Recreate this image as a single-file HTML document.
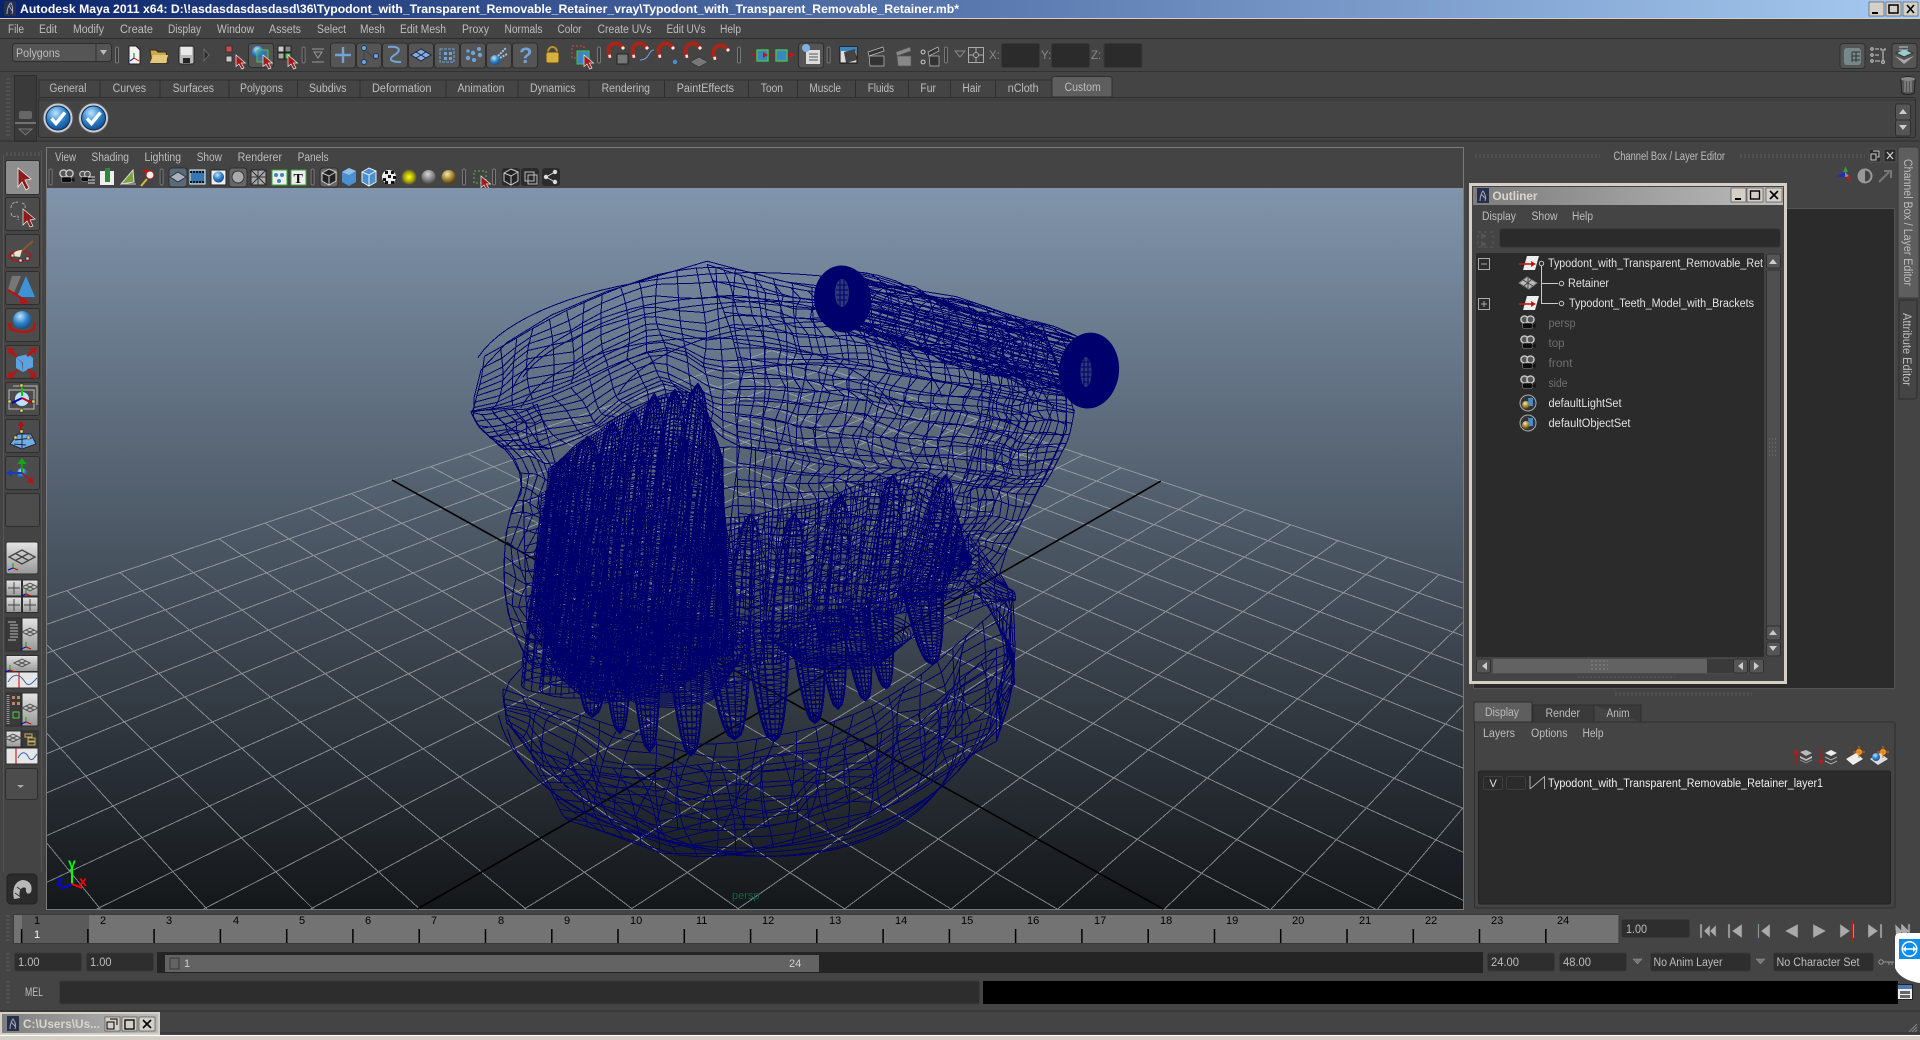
<!DOCTYPE html>
<html lang="en"><head><meta charset="utf-8"><title>Autodesk Maya 2011</title>
<style>
html,body{margin:0;padding:0;background:#444;overflow:hidden;width:1920px;height:1040px}
svg{display:block}
text{font-family:"Liberation Sans",sans-serif;font-size:11.5px;fill:#bdbdbd;white-space:pre}
.w{fill:#e2e2e2}.d{fill:#6f6f6f}.k{fill:#000;font-size:11px}
.b{stroke:#2e2e2e;fill:#555}
.g{stroke:#5d5d5d;stroke-dasharray:2 2;stroke-width:1;fill:none}
</style></head><body>
<svg xmlns="http://www.w3.org/2000/svg" width="1920" height="1040" viewBox="0 0 1920 1040">
<defs>
<linearGradient id="tb" x1="0" x2="1" y1="0" y2="0"><stop offset="0" stop-color="#0a246a"/><stop offset="1" stop-color="#a6caf0"/></linearGradient>
<linearGradient id="ot" x1="0" x2="1" y1="0" y2="0"><stop offset="0" stop-color="#7d7d7d"/><stop offset="1" stop-color="#bcbcbc"/></linearGradient>
<linearGradient id="vp" x1="0" x2="0" y1="0" y2="1"><stop offset="0" stop-color="#8094ab"/><stop offset="1" stop-color="#14171a"/></linearGradient>
<linearGradient id="lb" x1="0" x2="0" y1="0" y2="1"><stop offset="0" stop-color="#e4e4e4"/><stop offset="1" stop-color="#989898"/></linearGradient>
<radialGradient id="bl" cx=".4" cy=".3" r=".8"><stop offset="0" stop-color="#bfe4ff"/><stop offset=".5" stop-color="#2f83c8"/><stop offset="1" stop-color="#0b3f80"/></radialGradient>
<radialGradient id="gd" cx=".4" cy=".3" r=".8"><stop offset="0" stop-color="#f6e9b0"/><stop offset=".55" stop-color="#9a7a2a"/><stop offset="1" stop-color="#2e2408"/></radialGradient>
<radialGradient id="yl" cx=".5" cy=".5" r=".5"><stop offset="0" stop-color="#ffff30"/><stop offset=".6" stop-color="#aaa800"/><stop offset="1" stop-color="#444"/></radialGradient>
<radialGradient id="gy" cx=".45" cy=".3" r=".8"><stop offset="0" stop-color="#d8d8d8"/><stop offset="1" stop-color="#333"/></radialGradient>
<clipPath id="vc"><rect x="47" y="188" width="1416" height="721"/></clipPath>
<clipPath id="tc"><rect x="1476" y="253" width="288" height="400"/></clipPath>
<g id="cur"><path d="M0 0V11.5L3 9L5.7 14L8 13L5.4 8H9.5Z" fill="#a11d1d" stroke="#f0f0f0" stroke-width=".7"/></g>
<g id="sep"><rect x="-1.5" y="-8" width="3" height="16" rx="1.5" fill="#3a3a3a" stroke="#777"/></g>
<g id="cam"><circle cx="-3" cy="-3.5" r="3.6" fill="#555" stroke="#ccc" stroke-width="1.4"/><circle cx="3" cy="-3.5" r="3.6" fill="#555" stroke="#ccc" stroke-width="1.4"/><rect x="-5" y="0" width="10" height="5.5" rx="2" fill="#0c0c0c" stroke="#999" stroke-width=".6"/><path d="M5 2L8 .5V5L5 3.5Z" fill="#111"/></g>
<g id="mag"><path d="M-6 6L-7.5 -1A7.5 7.5 0 0 1 3 -8L8 -3" fill="none" stroke="#aa2418" stroke-width="4"/><path d="M-7.5 4.5L-5 4M6 -5L8 -3" stroke="#eee" stroke-width="3" fill="none"/></g>
<g id="chk"><circle r="15" fill="#c8ccd0" stroke="#555"/><circle r="12" fill="url(#bl)" stroke="#0a2a55"/><path d="M-6.5 .5L-2 5.5L7 -5.5" fill="none" stroke="#fff" stroke-width="3.4"/></g>
<g id="cube"><path d="M-7 -4L0 -8L7 -5V4L0 8L-7 4Z" fill="#222" stroke="#ccc"/><path d="M-7 -4L0 -1L7 -5M0 -1V8" fill="none" stroke="#ccc"/></g>
<g id="plane"><path d="M-12 0L0 -6L12 0L0 6ZM-6 -3L6 3M6 -3L-6 3" fill="#aaa" stroke="#333" stroke-width="1.2"/></g>
<g id="mini"><path d="M-8 0L0 -4L8 0L0 4ZM-4 -2L4 2M4 -2L-4 2" fill="none" stroke="#555"/></g>
<g id="axs"><path d="M0 0V-5" stroke="#0a0"/><path d="M0 0L-5 2" stroke="#00c"/><path d="M0 0L5 2" stroke="#c00"/></g>
<g id="xfm"><path d="M-5 7L-1 -7H11L7 7Z" fill="#eee"/><path d="M-9 1H6" stroke="#c01818" stroke-width="1.6"/><path d="M3 -2L8 1L3 4Z" fill="#c01818"/></g>
<g id="set"><circle r="8" fill="#333" stroke="#aaa"/><circle cx="-2" cy="2" r="4" fill="url(#gd)"/><path d="M0 -5L5 -5V3L1 3Z" fill="#3f8ed0"/></g>
</defs>

<rect width="1920" height="1040" fill="#444"/>

<!-- title bar -->
<rect width="1920" height="18" fill="url(#tb)"/>
<rect y="18" width="1920" height="1" fill="#d4d0c8"/>
<rect x="4" y="1" width="12" height="15" fill="#26304a"/><path d="M7 14C7 8 9 4 11 3C13 7 13 11 12 14M9 6L13 12" stroke="#aab" fill="none"/>
<text x="20" y="13" textLength="939" lengthAdjust="spacingAndGlyphs" style="font-weight:bold;font-size:12px;fill:#fff">Autodesk Maya 2011 x64: D:\!asdasdasdasdasd\36\Typodont_with_Transparent_Removable_Retainer_vray\Typodont_with_Transparent_Removable_Retainer.mb*</text>
<g fill="#d4d0c8" stroke="#333" stroke-width=".5">
<rect x="1869" y="2" width="15" height="14"/><rect x="1886" y="2" width="15" height="14"/><rect x="1903" y="2" width="15" height="14"/></g>
<path d="M1872 13H1878" stroke="#000" stroke-width="2"/><rect x="1889" y="5" width="9" height="8" fill="none" stroke="#000" stroke-width="1.5"/><path d="M1907 5L1914 13M1914 5L1907 13" stroke="#000" stroke-width="1.6"/>

<!-- menu -->
<g>
<text x="8" y="33" textLength="16" lengthAdjust="spacingAndGlyphs">File</text>
<text x="39" y="33" textLength="18" lengthAdjust="spacingAndGlyphs">Edit</text>
<text x="73" y="33" textLength="31" lengthAdjust="spacingAndGlyphs">Modify</text>
<text x="120" y="33" textLength="33" lengthAdjust="spacingAndGlyphs">Create</text>
<text x="168" y="33" textLength="33" lengthAdjust="spacingAndGlyphs">Display</text>
<text x="217" y="33" textLength="37" lengthAdjust="spacingAndGlyphs">Window</text>
<text x="269" y="33" textLength="32" lengthAdjust="spacingAndGlyphs">Assets</text>
<text x="317" y="33" textLength="29" lengthAdjust="spacingAndGlyphs">Select</text>
<text x="360" y="33" textLength="25" lengthAdjust="spacingAndGlyphs">Mesh</text>
<text x="400" y="33" textLength="46" lengthAdjust="spacingAndGlyphs">Edit Mesh</text>
<text x="462" y="33" textLength="27" lengthAdjust="spacingAndGlyphs">Proxy</text>
<text x="504.5" y="33" textLength="38" lengthAdjust="spacingAndGlyphs">Normals</text>
<text x="557.5" y="33" textLength="24" lengthAdjust="spacingAndGlyphs">Color</text>
<text x="597.5" y="33" textLength="54" lengthAdjust="spacingAndGlyphs">Create UVs</text>
<text x="666.5" y="33" textLength="39" lengthAdjust="spacingAndGlyphs">Edit UVs</text>
<text x="720" y="33" textLength="21" lengthAdjust="spacingAndGlyphs">Help</text>
</g>
<rect y="38" width="1920" height="1" fill="#2c2c2c"/>
<rect y="71" width="1920" height="1" fill="#333"/>

<!-- status toolbar -->
<rect x="12.5" y="43.5" width="99" height="18" rx="3" class="b"/><path d="M96 44V61" stroke="#2e2e2e"/>
<text x="16" y="57" textLength="44" lengthAdjust="spacingAndGlyphs">Polygons</text><path d="M100 50H107L103.5 55Z" fill="#bbb"/>
<use href="#sep" x="117" y="55"/><use href="#sep" x="303.6" y="55"/><use href="#sep" x="599" y="55"/><use href="#sep" x="739" y="55"/><use href="#sep" x="828.6" y="55"/><use href="#sep" x="946" y="55"/>
<path d="M204 49L209 55L204 61Z" fill="#2c2c2c" stroke="#666"/>
<path d="M129 46H136L140 50V64H129Z" fill="#f2f2f2" stroke="#222"/><path d="M134 58V53" stroke="#080"/><path d="M134 58L130 61" stroke="#00c"/><path d="M134 58L139 61" stroke="#c00"/>
<path d="M150 50H156L158 52H166L168 63H152Z" fill="#caa850" stroke="#3a2c08"/><path d="M150 63L153 55H168L166 63Z" fill="#e2c878"/>
<rect x="179" y="46" width="15" height="18" rx="2" fill="#b8b8b8" stroke="#222"/><rect x="181" y="47" width="11" height="8" fill="#e8e8e8"/><rect x="183" y="58" width="7" height="5" fill="#222"/>
<rect x="226" y="46" width="6" height="6" fill="#d84848" stroke="#333"/><rect x="226" y="56" width="6" height="6" fill="#ccc" stroke="#333"/><use href="#cur" x="236" y="55"/>
<rect x="248.5" y="43.5" width="25" height="24" rx="3" class="b"/><circle cx="258" cy="52" r="6" fill="url(#bl)"/><rect x="257" y="50" width="11" height="12" fill="#3a86c0" fill-opacity=".6" stroke="#4ec04e"/><use href="#cur" x="263" y="55"/>
<rect x="278" y="46" width="6" height="6" fill="#ccc" stroke="#222"/><rect x="285" y="46" width="6" height="6" fill="#888" stroke="#222"/><rect x="278" y="53" width="6" height="6" fill="#aaa" stroke="#222"/><rect x="285" y="53" width="6" height="6" fill="#4ec04e" stroke="#222"/><use href="#cur" x="288" y="55"/>
<path d="M312 49H324M314 52H322L318 58ZM312 62H324" stroke="#999" fill="none"/>
<g class="b"><rect x="330.5" y="43" width="25" height="25" rx="3"/><rect x="356.5" y="43" width="25" height="25" rx="3"/><rect x="382.5" y="43" width="25" height="25" rx="3"/><rect x="408.5" y="43" width="25" height="25" rx="3"/><rect x="434.5" y="43" width="25" height="25" rx="3"/><rect x="460.5" y="43" width="25" height="25" rx="3"/><rect x="486.5" y="43" width="25" height="25" rx="3"/><rect x="512.5" y="43" width="25" height="25" rx="3"/></g>
<path d="M343 47V63M335 55H351" stroke="#6fa4d8" stroke-width="2.4"/>
<path d="M364 62V49L376 60" fill="none" stroke="#444"/><g fill="#6fa4d8" stroke="#1e3a5a"><circle cx="364" cy="48" r="2.5"/><circle cx="364" cy="62" r="2.5"/><circle cx="376" cy="56" r="2.5"/></g>
<path d="M388 47C398 46 402 49 396 54C389 58 388 62 401 62" fill="none" stroke="#6fa4d8" stroke-width="2"/>
<path d="M411 55L421 49L431 55L421 61Z" fill="#7fb0dc" stroke="#224"/><path d="M416 52L426 58M426 52L416 58" stroke="#224"/>
<rect x="440" y="49" width="14" height="13" fill="none" stroke="#6fa4d8" stroke-dasharray="3 1"/><g fill="#6fa4d8"><rect x="444" y="52" width="3" height="3"/><rect x="449" y="52" width="3" height="3"/><rect x="444" y="57" width="3" height="3"/><rect x="449" y="57" width="3" height="3"/></g>
<g fill="#6fa4d8"><circle cx="468" cy="58" r="2.2"/><circle cx="473" cy="53" r="2.2"/><circle cx="479" cy="49" r="2"/><circle cx="474" cy="60" r="2"/><circle cx="480" cy="55" r="2.2"/><circle cx="468" cy="51" r="1.6"/></g>
<circle cx="495" cy="60" r="5" fill="url(#bl)"/><path d="M498 56L506 48M500 58L507 54" stroke="#9cc4e6" stroke-width="2" stroke-dasharray="2 1"/>
<text x="519" y="63" style="font-size:22px;fill:#6fa4d8;font-weight:bold">?</text>
<path d="M548 52A4.5 5 0 0 1 557 52" fill="none" stroke="#b89030" stroke-width="2"/><rect x="546" y="52" width="13" height="11" rx="2" fill="#d8b040" stroke="#5c4610"/>
<rect x="572" y="46" width="12" height="12" fill="none" stroke="#d84848" stroke-dasharray="2 2"/><rect x="577" y="51" width="12" height="13" fill="#3a86c0" stroke="#4ec04e"/><use href="#cur" x="584" y="55"/>
<use href="#mag" x="616" y="52"/><rect x="617" y="54" width="11" height="10" fill="#777" stroke="#222"/><use href="#mag" x="640" y="52"/><path d="M640 60C650 60 648 50 654 50" stroke="#6fa4d8" fill="none"/><use href="#mag" x="666" y="52"/><circle cx="675" cy="62" r="2.2" fill="#4a90d0"/><use href="#mag" x="693" y="52"/><path d="M690 62L699 57L708 62L699 67Z" fill="#777" stroke="#222" stroke-width=".5"/><use href="#mag" x="721" y="54"/>
<path d="M751 55H764M770 55H794" stroke="#b01818" stroke-width="1.4"/><rect x="757" y="50" width="11" height="11" fill="#3a86c0" stroke="#4ec04e" stroke-width="1.4"/><rect x="776" y="50" width="11" height="11" fill="#3a86c0" stroke="#4ec04e" stroke-width="1.4"/><path d="M763 52L768 55L763 58ZM790 52L795 55L790 58Z" fill="#c01818"/>
<rect x="798.5" y="43" width="25" height="25" rx="3" class="b"/><rect x="806" y="50" width="14" height="14" fill="#ddd"/><path d="M809 54H818M809 57H818M809 60H818" stroke="#555"/><circle cx="806" cy="48" r="4" fill="#7fb0e0"/>
<rect x="840" y="47" width="17" height="16" fill="#ddd" stroke="#111"/><rect x="840" y="47" width="17" height="4" fill="#3a86c0"/><path d="M844 52L855 49L857 60L846 63Z" fill="#444"/>
<path d="M868 52L883 47L884 51L869 56ZM869 56H884V66H870Z" fill="#333" stroke="#bbb" stroke-width=".7"/>
<path d="M896 52L910 47L911 51L897 56ZM897 56H911V66H898Z" fill="#888" stroke="#555" stroke-width=".7"/><path d="M923 50a2 2 0 1 0 .1 0M923 60a2 2 0 1 0 .1 0" fill="none" stroke="#ccc"/><path d="M928 52L938 47L939 51L929 56ZM929 56H939V66H930Z" fill="#333" stroke="#bbb" stroke-width=".7"/>
<path d="M955 51H965L960 57Z" fill="none" stroke="#888"/><rect x="968.5" y="47.5" width="15" height="15" fill="none" stroke="#aaa"/><path d="M976 47V63M968 55H984" stroke="#aaa"/><circle cx="976" cy="55" r="2.5" fill="#444" stroke="#aaa"/>
<text x="989" y="59" style="fill:#888">X:</text><text x="1041" y="59" style="fill:#888">Y:</text><text x="1091" y="59" style="fill:#888">Z:</text>
<g fill="#2b2b2b" stroke="#383838"><rect x="1001.5" y="43.5" width="38" height="24" rx="2"/><rect x="1051.5" y="43.5" width="38" height="24" rx="2"/><rect x="1104" y="43.5" width="38" height="24" rx="2"/></g>
<rect x="1840" y="43.5" width="25" height="25" rx="3" class="b"/><rect x="1844" y="48" width="17" height="17" rx="3" fill="#788"/><path d="M1852 52H1860M1852 56H1860M1852 60H1860M1852 52V62M1856 52V62" stroke="#333"/>
<circle cx="1872" cy="49" r="1.2" fill="none" stroke="#ccc"/><circle cx="1872" cy="55" r="1.2" fill="none" stroke="#ccc"/><circle cx="1872" cy="61" r="1.2" fill="none" stroke="#ccc"/><path d="M1875 49H1879M1875 55H1879M1875 61H1880M1883 51V60" stroke="#ccc"/><path d="M1881 48V50H1885V48" fill="none" stroke="#ccc"/><circle cx="1883" cy="62" r="1.4" fill="none" stroke="#ccc"/>
<rect x="1892" y="43.5" width="25" height="25" rx="3" class="b"/><path d="M1895 56L1904 60L1914 56L1904 64Z" fill="#aaa"/><path d="M1896 53L1904 57L1913 53L1904 49Z" fill="#9cc" stroke="#333"/><path d="M1899 47H1908M1899 50H1908" stroke="#bcd"/>

<!-- shelf -->
<path d="M7 78V138" class="g"/><path d="M9 78V138" class="g"/>
<rect x="14.5" y="75.5" width="22" height="66" fill="#3a3a3a" stroke="#2e2e2e"/><rect x="19" y="111" width="13" height="8" rx="2" fill="#666"/><path d="M15 123H36" stroke="#aaa"/><path d="M19 129H32L25.5 135Z" fill="#444" stroke="#777"/>
<g>
<path d="M39 97V80H100V97M100 80H160V97M160 80H229V97M229 80H297.5V97M297.5 80H360V97M360 80H446V97M446 80H518V97M518 80H589V97M589 80H664.5V97M664.5 80H748.5V97M748.5 80H797.5V97M797.5 80H855.5V97M855.5 80H908.5V97M908.5 80H950.6V97M950.6 80H995.5V97M995.5 80H1052" fill="#444" stroke="#2e2e2e"/>
<path d="M1052 97V79Q1052 76.5 1055 76.5H1109Q1112 76.5 1112 79V97Z" fill="#5e5e5e" stroke="#2e2e2e"/>
<text x="49.4" y="92" textLength="37" lengthAdjust="spacingAndGlyphs">General</text>
<text x="112.6" y="92" textLength="33.4" lengthAdjust="spacingAndGlyphs">Curves</text>
<text x="172.6" y="92" textLength="41.4" lengthAdjust="spacingAndGlyphs">Surfaces</text>
<text x="240" y="92" textLength="43" lengthAdjust="spacingAndGlyphs">Polygons</text>
<text x="309" y="92" textLength="37.5" lengthAdjust="spacingAndGlyphs">Subdivs</text>
<text x="372" y="92" textLength="59.4" lengthAdjust="spacingAndGlyphs">Deformation</text>
<text x="457.5" y="92" textLength="47" lengthAdjust="spacingAndGlyphs">Animation</text>
<text x="530" y="92" textLength="45.5" lengthAdjust="spacingAndGlyphs">Dynamics</text>
<text x="601.6" y="92" textLength="48.4" lengthAdjust="spacingAndGlyphs">Rendering</text>
<text x="676.7" y="92" textLength="57.3" lengthAdjust="spacingAndGlyphs">PaintEffects</text>
<text x="760.8" y="92" textLength="22.2" lengthAdjust="spacingAndGlyphs">Toon</text>
<text x="809.4" y="92" textLength="31.6" lengthAdjust="spacingAndGlyphs">Muscle</text>
<text x="867.8" y="92" textLength="26.2" lengthAdjust="spacingAndGlyphs">Fluids</text>
<text x="920.4" y="92" textLength="15.6" lengthAdjust="spacingAndGlyphs">Fur</text>
<text x="962.4" y="92" textLength="18.6" lengthAdjust="spacingAndGlyphs">Hair</text>
<text x="1007.8" y="92" textLength="30.7" lengthAdjust="spacingAndGlyphs">nCloth</text>
<text x="1064.5" y="91" textLength="36.2" lengthAdjust="spacingAndGlyphs">Custom</text>
</g>
<path d="M1901 80a4 2 0 0 1 14 0l-1 13q-6 3 -12 0Z" fill="#555" stroke="#222"/><path d="M1905 81V92M1908 81V92M1911 81V92" stroke="#999"/><ellipse cx="1908" cy="79" rx="7" ry="2" fill="#888"/>
<rect x="38.5" y="97.5" width="1877" height="40" rx="2" fill="#444" stroke="#2e2e2e"/><path d="M39 100H1915" stroke="#333"/>
<path d="M0 141H1920" stroke="#2e2e2e"/>
<use href="#chk" x="58" y="118"/><use href="#chk" x="93.5" y="118"/>
<rect x="1895.5" y="104" width="15" height="16" rx="2" fill="#555" stroke="#2e2e2e"/><rect x="1895.5" y="120" width="15" height="16" rx="2" fill="#555" stroke="#2e2e2e"/><path d="M1899 114H1907L1903 109ZM1899 125H1907L1903 130Z" fill="#ccc"/>

<!-- left tools -->
<path d="M6 155H40" class="g"/><path d="M6 153H40" class="g"/>
<path d="M41.5 150V872M3.5 155V872" stroke="#555"/>
<g class="b" style="fill:#4c4c4c"><rect x="5.5" y="197.5" width="34" height="33" rx="2"/><rect x="5.5" y="234.5" width="34" height="33" rx="2"/><rect x="5.5" y="271.5" width="34" height="33" rx="2"/><rect x="5.5" y="308.5" width="34" height="33" rx="2"/><rect x="5.5" y="345.5" width="34" height="33" rx="2"/><rect x="5.5" y="382.5" width="34" height="33" rx="2"/><rect x="5.5" y="419.5" width="34" height="33" rx="2"/><rect x="5.5" y="456.5" width="34" height="33" rx="2"/><rect x="5.5" y="493.5" width="34" height="33" rx="2"/></g>
<rect x="5.5" y="160.5" width="34" height="34" rx="2" fill="#8e8e8e" stroke="#2e2e2e"/><path d="M18 168L18 187L22 182L26 190L29 188L25 180L31 179Z" fill="#8c1c1c" stroke="#eee" stroke-width=".8"/>
<path d="M11 208Q11 202 18 202M22 203Q26 204 25 208M11 213Q12 218 16 216Q19 215 18 220" fill="none" stroke="#aaa" stroke-dasharray="3 1"/><path d="M23 209L23 225L27 221L30 227L33 226L30 220L35 219Z" fill="#8c1c1c" stroke="#eee" stroke-width=".7"/>
<ellipse cx="20" cy="256" rx="11" ry="5" fill="none" stroke="#b01818" stroke-width="1.6"/><path d="M18 254L33 241" stroke="#8a5a2a" stroke-width="2"/><path d="M12 256Q14 250 22 250L20 257Z" fill="#ece4c8"/><g fill="#ddd" stroke="#222" stroke-width=".6"><rect x="11" y="254" width="3" height="3"/><rect x="19" y="259" width="3" height="3"/><rect x="26" y="257" width="3" height="3"/></g>
<path d="M14 293L21 276H12L8 290Z" fill="#777"/><path d="M26 276L35 297H17Z" fill="#3e92d8"/><path d="M8 290L26 301" stroke="#b01818" stroke-width="2.4"/><path d="M20 296L30 303L20 304Z" fill="#b01818"/>
<circle cx="22" cy="320" r="9" fill="url(#bl)"/><path d="M10 327A13 6 0 0 0 34 329L35 322" fill="none" stroke="#b01818" stroke-width="2.6"/><path d="M7 323L12 323L10 331Z" fill="#b01818"/>
<path d="M16 357L28 354L33 358L22 363ZM16 357V368L23 372V363ZM22 363L33 358V367L23 372Z" fill="#5ba3e0"/><path d="M8 349L17 357M35 349L27 356M9 378L17 370M35 378L28 369" stroke="#b01818" stroke-width="2.6"/><path d="M7 347L15 349L9 355ZM37 347L29 349L35 355ZM7 379L15 377L9 371ZM37 379L29 377L35 371Z" fill="#b01818"/>
<path d="M9 390H34V409H9ZM13 386H37V405" fill="none" stroke="#bbb"/><circle cx="22" cy="399" r="7" fill="#bfe0ff"/><path d="M22 385V396" stroke="#0c0" stroke-width="2"/><path d="M22 398L12 403" stroke="#00c" stroke-width="2"/><path d="M22 398L32 403" stroke="#c00" stroke-width="2"/><g fill="#e8e070" stroke="#222" stroke-width=".5"><rect x="20" y="384" width="3" height="3"/><rect x="8" y="400" width="3" height="3"/><rect x="32" y="400" width="3" height="3"/><rect x="20" y="409" width="3" height="3"/></g>
<path d="M10 444L18 434H31L36 444L22 449Z" fill="#6fb0e0" stroke="#224"/><path d="M15 440L32 438M14 444L26 445M22 434V448" stroke="#224"/><path d="M21 432V424" stroke="#c00" stroke-width="2"/><path d="M18 426L21 421L24 426Z" fill="#c00"/><g fill="#e8e070" stroke="#222" stroke-width=".5"><rect x="20" y="430" width="3" height="3"/><rect x="14" y="436" width="3" height="3"/><rect x="27" y="436" width="3" height="3"/></g>
<circle cx="22" cy="473" r="5" fill="url(#bl)"/><path d="M22 473V461" stroke="#0a0" stroke-width="2"/><path d="M17.5 464L22 458L26.5 464Z" fill="#1a1"/><path d="M22 473H10" stroke="#1a3ac0" stroke-width="2"/><path d="M12 469L6 473L12 477Z" fill="#1a3ac0"/><path d="M22 473L30 480" stroke="#b01818" stroke-width="2"/><path d="M27 482L34 484L32 476Z" fill="#b01818"/>
<!-- layout buttons -->
<rect x="6" y="542" width="32" height="32" rx="2" fill="url(#lb)" stroke="#2e2e2e"/><g transform="translate(22,557)"><path d="M-13 0L0 -7L13 0L0 7ZM-6.5 -3.500L6.500 3.500M6.500 -3.500L-6.500 3.500" fill="none" stroke="#444" stroke-width="1.300"/></g><use href="#axs" x="13" y="568"/>
<g fill="url(#lb)" stroke="#2e2e2e"><rect x="6" y="580" width="15.5" height="16"/><rect x="22.5" y="580" width="15.5" height="16"/><rect x="6" y="597" width="15.5" height="15.5"/><rect x="22.5" y="597" width="15.5" height="15.5"/></g>
<path d="M14 582V594M8 588H20M14 599V611M8 605H20M30 599V611M24 605H36" stroke="#444"/><use href="#mini" x="30" y="587"/><use href="#axs" x="26" y="594"/>
<rect x="6" y="618" width="15" height="33" fill="#3a3a3a" stroke="#2e2e2e"/><rect x="22" y="618" width="16" height="33" fill="url(#lb)" stroke="#2e2e2e"/><path d="M8 622H16M10 625H18M10 628H18M10 631H18M10 634H18M10 637H18M8 640H16" stroke="#bbb"/><use href="#mini" x="30" y="632"/><use href="#axs" x="26" y="647"/>
<rect x="6" y="655.5" width="32" height="16" fill="url(#lb)" stroke="#2e2e2e"/><rect x="6" y="672" width="32" height="16" fill="#e6e6e6" stroke="#2e2e2e"/><use href="#mini" x="22" y="663"/><use href="#axs" x="10" y="670"/><path d="M19 672V688" stroke="#c00"/><path d="M8 682C14 672 20 674 25 682C29 688 33 682 37 678" fill="none" stroke="#36a"/>
<rect x="6" y="693" width="15" height="33" fill="#3a3a3a" stroke="#2e2e2e"/><rect x="22" y="693" width="16" height="33" fill="url(#lb)" stroke="#2e2e2e"/><path d="M8 695V724" stroke="#999" stroke-width="3" stroke-dasharray="1 1"/><g fill="#b86"><rect x="12" y="696" width="3" height="3"/><rect x="17" y="696" width="3" height="3"/><rect x="12" y="702" width="3" height="3"/><rect x="17" y="702" width="3" height="3"/></g><rect x="13" y="712" width="6" height="6" fill="none" stroke="#5c5"/><use href="#mini" x="30" y="708"/><use href="#axs" x="26" y="722"/>
<rect x="6" y="731" width="15" height="16" fill="url(#lb)" stroke="#2e2e2e"/><rect x="22" y="731" width="16" height="16" fill="#3a3a3a" stroke="#2e2e2e"/><rect x="6" y="748" width="32" height="16" fill="#e6e6e6" stroke="#2e2e2e"/><use href="#mini" x="13" y="738"/><path d="M25 734H32V737H25ZM28 738H35V741H28ZM28 742H35V745H28Z" fill="none" stroke="#c8b060"/><path d="M16 748V764" stroke="#c00"/><path d="M18 758C22 750 26 752 29 758C32 762 34 758 37 754" fill="none" stroke="#36a"/>
<rect x="5.5" y="768.5" width="32" height="31" rx="2" fill="#4c4c4c" stroke="#2e2e2e"/><path d="M17 785H24L20.5 788Z" fill="#aaa"/>
<rect x="7" y="874" width="30" height="30" rx="4" fill="#2b2b2b" stroke="#222"/><path d="M14 899C12 890 14 882 22 880C30 880 33 886 31 892C28 896 25 892 26 888C22 886 18 890 20 898Z" fill="#b8b8b8"/><path d="M17 887L25 893M15 893L22 898" stroke="#333"/>

<!-- viewport -->
<rect x="46.5" y="147.5" width="1417" height="762" fill="#444" stroke="#7a7a7a"/>
<text x="55" y="161" textLength="21" lengthAdjust="spacingAndGlyphs">View</text>
<text x="91.4" y="161" textLength="37.6" lengthAdjust="spacingAndGlyphs">Shading</text>
<text x="144.5" y="161" textLength="36.5" lengthAdjust="spacingAndGlyphs">Lighting</text>
<text x="196.7" y="161" textLength="25.3" lengthAdjust="spacingAndGlyphs">Show</text>
<text x="237.6" y="161" textLength="44.4" lengthAdjust="spacingAndGlyphs">Renderer</text>
<text x="297.6" y="161" textLength="31" lengthAdjust="spacingAndGlyphs">Panels</text>
<use href="#sep" x="50.6" y="177"/><use href="#sep" x="161.6" y="177"/><use href="#sep" x="312.6" y="177"/><use href="#sep" x="464" y="177"/><use href="#sep" x="494" y="177"/>
<use href="#cam" x="66.5" y="177"/><g transform="translate(85,177) scale(.8)"><use href="#cam"/></g><path d="M88 177H95M88 180H95M88 183H95" stroke="#ddd"/>
<rect x="100" y="171" width="14" height="14" fill="#eee"/><rect x="105" y="168" width="5" height="14" fill="#2a8a3a"/>
<path d="M121 184L133 170L134 182Z" fill="#7fa040" stroke="#ddd"/><path d="M121 184L136 184" stroke="#ccc"/>
<path d="M142 171H150M146 167V176" stroke="#c01818" stroke-width="1.4"/><circle cx="150" cy="175" r="4" fill="#eee" stroke="#b01818"/><path d="M147 179L141 186" stroke="#d8b840" stroke-width="2"/>
<rect x="169" y="168" width="18" height="19" rx="3" fill="#5a6a7a" stroke="#2e2e2e"/><path d="M170 177L178 172L186 177L178 182Z" fill="#a8b4c0" stroke="#333"/>
<rect x="190" y="170" width="15" height="14" fill="#3878b0" stroke="#eee"/><path d="M190 172H205M190 182H205" stroke="#111" stroke-width="2" stroke-dasharray="2 1"/>
<rect x="211" y="170" width="15" height="15" fill="#eee" stroke="#222"/><circle cx="218.5" cy="177" r="5.5" fill="url(#bl)"/>
<rect x="229" y="168" width="18" height="19" rx="3" fill="#666" stroke="#2e2e2e"/><circle cx="238" cy="177" r="6" fill="#aaa" stroke="#333"/>
<rect x="251" y="170" width="15" height="15" fill="#aaa" stroke="#222"/><path d="M251 170L266 185M266 170L251 185M258 170V185M251 177H266" stroke="#333"/>
<rect x="272" y="170" width="15" height="15" fill="#eee" stroke="#3a3"/><g fill="#3a86c0"><circle cx="276" cy="175" r="2"/><circle cx="282" cy="175" r="2"/><circle cx="279" cy="181" r="2"/></g>
<rect x="291" y="170" width="15" height="15" fill="#eee" stroke="#3a3"/><text x="293.5" y="183" style="font-size:14px;font-weight:bold;fill:#111;font-family:'Liberation Serif',serif">T</text>
<rect x="320" y="168" width="18" height="19" rx="3" fill="#666" stroke="#2e2e2e"/><use href="#cube" x="329" y="177"/>
<path d="M342 172L349 168L356 171V182L349 186L342 182Z" fill="#4a90d0"/><path d="M342 172L349 175L356 171L349 168Z" fill="#90c0e8"/>
<path d="M362 172L369 168L376 171V182L369 186L362 182Z" fill="#4a90d0" stroke="#eee"/><path d="M362 172L369 175L376 171M369 175V186" fill="none" stroke="#eee"/>
<circle cx="389" cy="177" r="7" fill="#eee"/><g fill="#111"><rect x="385" y="171" width="3" height="3"/><rect x="391" y="171" width="3" height="3"/><rect x="388" y="175" width="3" height="3"/><rect x="383" y="178" width="3" height="3"/><rect x="393" y="176" width="3" height="3"/><rect x="391" y="181" width="3" height="3"/><rect x="385" y="181" width="3" height="3"/></g>
<circle cx="409" cy="177" r="8" fill="url(#yl)"/><circle cx="428.6" cy="177" r="7" fill="url(#gy)"/><circle cx="448.6" cy="177" r="7" fill="url(#gd)"/>
<rect x="474" y="171" width="12" height="12" fill="none" stroke="#4ec04e" stroke-dasharray="2 2"/><use href="#cur" x="481" y="176"/>
<rect x="502" y="168" width="18" height="18" rx="3" fill="#2b2b2b"/><use href="#cube" x="511" y="177"/>
<rect x="521" y="168" width="18" height="18" rx="3" fill="#2b2b2b"/><rect x="525" y="172" width="9" height="9" fill="none" stroke="#bbb"/><rect x="528" y="175" width="9" height="9" fill="none" stroke="#bbb"/>
<rect x="542" y="168" width="18" height="18" rx="3" fill="#2b2b2b"/><path d="M546 177L555 172M546 177L555 182" stroke="#ddd"/><circle cx="546" cy="177" r="2.2" fill="#ddd"/><circle cx="555" cy="172" r="2.2" fill="#ddd"/><circle cx="555" cy="182" r="2.2" fill="#ddd"/>

<rect x="47" y="188" width="1416" height="721" fill="url(#vp)"/>
<path id="grid" fill="none" stroke="#a9acae" stroke-opacity=".72" stroke-width="1" shape-rendering="crispEdges"/>
<path id="axes" fill="none" stroke="#000" stroke-width="1.6"/>
<path id="wire" fill="none" stroke="#00006c" stroke-width="1" shape-rendering="crispEdges"/>
<ellipse cx="842.6" cy="299" rx="28.5" ry="33.5" transform="rotate(-6 842.6 299)" fill="#00006c"/>
<ellipse cx="842" cy="293" rx="7" ry="14" fill="#2c3a78"/><path d="M837 285H847M836 290H848M836 295H848M837 300H847M840 280V306M844 280V306" stroke="#00006c"/>
<ellipse cx="1089" cy="370.6" rx="30" ry="38" transform="rotate(6 1089 370.6)" fill="#00006c"/>
<ellipse cx="1086" cy="372" rx="5.5" ry="15" fill="#2c3a78"/><path d="M1082 362H1090M1081 367H1091M1081 372H1091M1081 377H1091M1083 382H1089M1084 358V386M1088 358V386" stroke="#00006c"/>
<g stroke-width="2" fill="none"><path d="M72 884V868" stroke="#0f0"/><path d="M72 884L61 889" stroke="#00f"/><path d="M72 884L82 888" stroke="#f00"/></g>
<text x="68" y="868" style="font-weight:bold;font-size:14px;fill:#0f0">y</text>
<text x="56" y="886" style="font-weight:bold;font-size:14px;fill:#00f">z</text>
<text x="79" y="886" style="font-weight:bold;font-size:14px;fill:#f00">x</text>
<text x="732" y="899" style="font-size:11px;fill:#1c5c40">persp</text>

<!-- channel box -->
<path d="M1475 155H1600M1740 155H1865" class="g"/><path d="M1475 157H1600M1740 157H1865" class="g"/>
<text x="1613.5" y="160" textLength="111.5" lengthAdjust="spacingAndGlyphs">Channel Box / Layer Editor</text>
<rect x="1869" y="149" width="12" height="13" rx="1" fill="#2b2b2b" stroke="#555"/><path d="M1873 151H1879V157H1877M1871 154H1876V160H1871Z" fill="none" stroke="#ccc"/>
<rect x="1884" y="149" width="12" height="13" rx="1" fill="#2b2b2b" stroke="#555"/><path d="M1887 152L1893 159M1893 152L1887 159" stroke="#ccc" stroke-width="1.3"/>
<path d="M1845 177L1841 175L1845 173L1845 168L1846 173L1850 177Z" fill="#888"/><path d="M1845.5 166L1848 172H1843Z" fill="#2a9a3a"/><path d="M1836 176L1845 172V178Z" fill="#2030b0"/><path d="M1846 178L1851 182L1849 175Z" fill="#b02020"/>
<circle cx="1865" cy="176" r="6.5" fill="none" stroke="#999" stroke-width="2"/><path d="M1865 170A6 6 0 0 0 1865 182Z" fill="#999"/>
<path d="M1879 182L1889 172M1884 171H1891V178" fill="none" stroke="#777" stroke-width="2"/>
<path d="M1898 298V150Q1898 147 1901 147H1916Q1918 147 1919 149V298Z" fill="#5e5e5e" stroke="#3a3a3a"/>
<path d="M1899 300H1917V396Q1917 399 1914 399H1899Z" fill="#444" stroke="#2e2e2e"/>
<text transform="translate(1904,159) rotate(90)" textLength="127" lengthAdjust="spacingAndGlyphs">Channel Box / Layer Editor</text>
<text transform="translate(1903,313) rotate(90)" textLength="73" lengthAdjust="spacingAndGlyphs">Attribute Editor</text>
<rect x="1473.5" y="208.5" width="421" height="480" fill="#2b2b2b" stroke="#555"/>
<path d="M1615 693H1752" class="g"/><path d="M1615 695H1752" class="g"/>

<!-- layer editor -->
<rect x="1474.5" y="722" width="420.5" height="186" rx="2" fill="#444" stroke="#2e2e2e"/>
<path d="M1533 722V705H1594V722M1594 705H1641V722" fill="#3a3a3a" stroke="#2e2e2e"/>
<path d="M1474 722V704Q1474 702 1476 702H1530Q1532 702 1532 704V722Z" fill="#5e5e5e" stroke="#2e2e2e"/>
<text x="1485" y="716" textLength="34" lengthAdjust="spacingAndGlyphs">Display</text>
<text x="1545.5" y="717" textLength="34.5" lengthAdjust="spacingAndGlyphs">Render</text>
<text x="1606.5" y="717" textLength="23" lengthAdjust="spacingAndGlyphs">Anim</text>
<text x="1483" y="737" textLength="32" lengthAdjust="spacingAndGlyphs">Layers</text>
<text x="1531" y="737" textLength="36.5" lengthAdjust="spacingAndGlyphs">Options</text>
<text x="1582.5" y="737" textLength="21" lengthAdjust="spacingAndGlyphs">Help</text>
<path d="M1796 750V764" stroke="#b01818" stroke-width="1.6"/><path d="M1793.5 754L1796.5 749L1799 754Z" fill="#c01818"/><path d="M1800 752L1806 750L1812 753L1806 756ZM1800 756L1806 759L1812 756V758L1806 761L1800 758Z" fill="#bbb"/><path d="M1800 760L1806 763L1812 760" stroke="#888" fill="none"/>
<path d="M1821 749V763" stroke="#b01818" stroke-width="1.6"/><path d="M1818.5 760L1821 765L1824 760Z" fill="#c01818"/><path d="M1825 753L1831 750L1837 753L1831 756Z" fill="#eee"/><path d="M1825 757L1831 760L1837 757M1825 761L1831 764L1837 761" stroke="#aaa" fill="none"/>
<path d="M1846 759L1856 753L1863 759L1853 765Z" fill="#eee"/><circle cx="1859" cy="752" r="3" fill="#ffb020"/><path d="M1859 746V758M1853 752H1865" stroke="#e86a10"/>
<path d="M1870 759L1880 753L1888 759L1878 765Z" fill="#ddd"/><circle cx="1876" cy="757" r="4" fill="url(#bl)"/><circle cx="1883" cy="752" r="3" fill="#ffb020"/><path d="M1883 746V758M1877 752H1889" stroke="#e86a10"/>
<rect x="1478.5" y="771" width="412" height="133" rx="2" fill="#2b2b2b" stroke="#222"/>
<rect x="1483.5" y="776.5" width="19" height="13" rx="2" fill="#2b2b2b" stroke="#3e3e3e"/><text x="1489.5" y="787" class="w" style="font-size:11px">V</text>
<rect x="1506.5" y="776.5" width="19" height="13" rx="2" fill="#2b2b2b" stroke="#3e3e3e"/>
<path d="M1530 776V789M1530 789L1544 777M1544.5 776V789" stroke="#aaa" fill="none"/>
<text x="1548" y="787" class="w" textLength="275" lengthAdjust="spacingAndGlyphs" style="fill:#f0f0f0">Typodont_with_Transparent_Removable_Retainer_layer1</text>

<!-- outliner -->
<rect x="1470.5" y="184.5" width="315" height="498" fill="#444" stroke="#d4d0c8" stroke-width="3"/>
<rect x="1473" y="187" width="310" height="18" fill="url(#ot)"/>
<rect x="1477" y="188" width="12" height="15" fill="#26304a"/><path d="M1480 201C1480 196 1482 192 1483 191C1486 195 1486 198 1485 201M1481 194L1486 199" stroke="#aab" fill="none"/>
<text x="1492.5" y="200" textLength="45" lengthAdjust="spacingAndGlyphs" style="font-weight:bold;fill:#d9d6cf;font-size:12px">Outliner</text>
<g fill="#d4d0c8" stroke="#222" stroke-width=".5"><rect x="1731" y="188" width="15" height="14"/><rect x="1747" y="188" width="16" height="14"/><rect x="1766" y="188" width="16" height="14"/></g>
<path d="M1735 199H1741" stroke="#000" stroke-width="2"/><rect x="1750.5" y="191" width="9" height="8" fill="none" stroke="#000" stroke-width="1.4"/><path d="M1770 191L1778 199M1778 191L1770 199" stroke="#000" stroke-width="1.6"/>
<text x="1482" y="220" textLength="34" lengthAdjust="spacingAndGlyphs">Display</text>
<text x="1531.5" y="220" textLength="26" lengthAdjust="spacingAndGlyphs">Show</text>
<text x="1572" y="220" textLength="21" lengthAdjust="spacingAndGlyphs">Help</text>
<rect x="1478" y="232" width="15" height="15" fill="none" stroke="#5a5a5a" stroke-dasharray="3 3"/><path d="M1481 233L1487 236L1481 239ZM1481 241L1487 244L1481 247Z" fill="#555"/>
<rect x="1500" y="229" width="280" height="18" rx="2" fill="#2b2b2b" stroke="#333"/>
<rect x="1476" y="253" width="288" height="404" fill="#2b2b2b"/>
<g clip-path="url(#tc)">
<rect x="1478.5" y="258.5" width="11" height="11" fill="none" stroke="#aaa"/><path d="M1481 264H1487" stroke="#aaa"/>
<rect x="1478.5" y="298.5" width="11" height="11" fill="none" stroke="#aaa"/><path d="M1481 304H1487M1484 301V307" stroke="#aaa"/>
<use href="#xfm" x="1528" y="263"/><circle cx="1541.5" cy="263.5" r="2.2" fill="none" stroke="#ccc"/><path d="M1541.5 266V303.5H1558M1541.5 283.5H1558" fill="none" stroke="#ccc"/><circle cx="1561.5" cy="283.5" r="2.2" fill="none" stroke="#ccc"/><circle cx="1561.5" cy="303.5" r="2.2" fill="none" stroke="#ccc"/>
<path d="M1519 283L1527 277L1537 283L1529 289Z" fill="#bbb" stroke="#777"/><path d="M1523 280L1533 286M1532 279L1524 286M1528 278V288" stroke="#444"/>
<use href="#xfm" x="1528" y="303"/>
<use href="#cam" x="1527.5" y="323"/><use href="#cam" x="1527.5" y="343"/><use href="#cam" x="1527.5" y="363"/><use href="#cam" x="1527.5" y="383"/>
<use href="#set" x="1528" y="403"/><use href="#set" x="1528" y="423"/>
<g>
<text x="1548" y="267" class="w" textLength="215" lengthAdjust="spacingAndGlyphs">Typodont_with_Transparent_Removable_Ret</text>
<text x="1568" y="287" class="w" textLength="41" lengthAdjust="spacingAndGlyphs">Retainer</text>
<text x="1569" y="307" class="w" textLength="185" lengthAdjust="spacingAndGlyphs">Typodont_Teeth_Model_with_Brackets</text>
<text x="1548.5" y="327" class="d" textLength="27" lengthAdjust="spacingAndGlyphs">persp</text>
<text x="1548.5" y="347" class="d" textLength="16" lengthAdjust="spacingAndGlyphs">top</text>
<text x="1548.5" y="367" class="d" textLength="24" lengthAdjust="spacingAndGlyphs">front</text>
<text x="1548.5" y="387" class="d" textLength="19" lengthAdjust="spacingAndGlyphs">side</text>
<text x="1548.5" y="407" class="w" textLength="73" lengthAdjust="spacingAndGlyphs">defaultLightSet</text>
<text x="1548.5" y="427" class="w" textLength="82" lengthAdjust="spacingAndGlyphs">defaultObjectSet</text>
</g></g>
<rect x="1766" y="253" width="14" height="404" fill="#4a4a4a"/>
<rect x="1766.5" y="254" width="14" height="14" rx="2" fill="#555" stroke="#2e2e2e"/><path d="M1769 264H1777L1773 259Z" fill="#ccc"/>
<rect x="1766.5" y="270" width="14" height="370" rx="1" fill="#4f4f4f" stroke="#333"/>
<rect x="1766.5" y="626" width="14" height="14" rx="2" fill="#555" stroke="#2e2e2e"/><path d="M1769 635H1777L1773 630Z" fill="#ccc"/>
<rect x="1766.5" y="642" width="14" height="14" rx="2" fill="#555" stroke="#2e2e2e"/><path d="M1769 646H1777L1773 651Z" fill="#ccc"/>
<path d="M1769 439H1778M1769 443H1778M1769 447H1778M1769 451H1778M1769 455H1778" stroke="#777" stroke-dasharray="1 2"/>
<rect x="1476" y="658" width="288" height="16" fill="#4a4a4a"/>
<rect x="1476.5" y="659" width="14" height="14" rx="2" fill="#555" stroke="#2e2e2e"/><path d="M1487 662V670L1482 666Z" fill="#ccc"/>
<rect x="1493" y="659" width="214" height="14" fill="#626262"/><path d="M1591 661H1608M1591 665H1608M1591 669H1608" stroke="#888" stroke-dasharray="2 2"/>
<rect x="1707" y="659" width="26" height="14" fill="#3a3a3a"/>
<rect x="1733.5" y="659" width="14" height="14" rx="2" fill="#555" stroke="#2e2e2e"/><path d="M1743 662V670L1738 666Z" fill="#ccc"/>
<rect x="1749.5" y="659" width="14" height="14" rx="2" fill="#555" stroke="#2e2e2e"/><path d="M1754 662V670L1759 666Z" fill="#ccc"/>
<path d="M1578 677H1675" class="g"/>

<!-- timeline -->
<path d="M7 915V943M9 915V943" class="g"/>
<rect x="13.5" y="914.5" width="1605.5" height="29" fill="#737373" stroke="#3a3a3a"/>
<rect x="22" y="915" width="67" height="28" fill="#5a5a5a"/>
<path id="ticks" stroke="#000" stroke-width="1.5" fill="none" d="M21.6 929V943"/>
<g>
<text class="k" x="34" y="924">1</text><text class="k" x="100" y="924">2</text><text class="k" x="166" y="924">3</text><text class="k" x="233" y="924">4</text><text class="k" x="299" y="924">5</text><text class="k" x="365" y="924">6</text><text class="k" x="431" y="924">7</text><text class="k" x="498" y="924">8</text><text class="k" x="564" y="924">9</text><text class="k" x="630" y="924">10</text><text class="k" x="696" y="924">11</text><text class="k" x="762" y="924">12</text><text class="k" x="829" y="924">13</text><text class="k" x="895" y="924">14</text><text class="k" x="961" y="924">15</text><text class="k" x="1027" y="924">16</text><text class="k" x="1094" y="924">17</text><text class="k" x="1160" y="924">18</text><text class="k" x="1226" y="924">19</text><text class="k" x="1292" y="924">20</text><text class="k" x="1359" y="924">21</text><text class="k" x="1425" y="924">22</text><text class="k" x="1491" y="924">23</text><text class="k" x="1557" y="924">24</text>
</g>
<text x="34" y="938" style="font-size:11px;fill:#f4f4f4">1</text>
<rect x="1621.5" y="919.5" width="68" height="18" rx="2" fill="#2e2e2e" stroke="#3a3a3a"/><text x="1626" y="933" textLength="21" lengthAdjust="spacingAndGlyphs">1.00</text>
<g fill="#aaa" stroke="#555" stroke-width=".5">
<path d="M1700 924V938H1702V924ZM1704 931L1710 925V937ZM1710 931L1716 925V937Z"/>
<path d="M1728 924V938H1730V924ZM1732 931L1742 924V938Z"/>
<path d="M1757 924V938H1759V924ZM1761 931L1770 924V938Z"/>
<path d="M1785 931L1798 924V938Z"/>
<path d="M1813 924V938L1826 931Z"/>
<path d="M1840 924L1850 931L1840 938ZM1852 924H1854V938H1852Z"/>
<path d="M1868 924L1878 931L1868 938ZM1880 924H1882V938H1880Z"/>
<path d="M1895 924L1901 930V924H1902L1908 930V924H1910V938H1908V932L1902 938V932L1896 938Z"/>
</g>
<path d="M1757.5 921V941M1852.5 921V941" stroke="#c01818"/>

<!-- range -->
<path d="M7 953V971M9 953V971" class="g"/>
<g fill="#2e2e2e" stroke="#3a3a3a"><rect x="14.5" y="953" width="67" height="18" rx="2"/><rect x="86.5" y="953" width="67" height="18" rx="2"/><rect x="1487.5" y="953" width="67" height="18" rx="2"/><rect x="1559.5" y="953" width="67" height="18" rx="2"/><rect x="1650.5" y="953" width="100" height="18" rx="2"/><rect x="1773.5" y="953" width="100" height="18" rx="2"/></g>
<rect x="157" y="952" width="1326" height="21" fill="#242424"/><rect x="165" y="955" width="654" height="17" fill="#636363"/>
<rect x="170" y="958" width="9" height="11" fill="none" stroke="#3a3a3a"/>
<text x="184" y="967" style="font-size:11px;fill:#d0d0d0">1</text><text x="789" y="967" style="font-size:11px;fill:#d0d0d0">24</text>
<text x="18" y="966" textLength="21.5" lengthAdjust="spacingAndGlyphs">1.00</text>
<text x="90" y="966" textLength="21.5" lengthAdjust="spacingAndGlyphs">1.00</text>
<text x="1491" y="966" textLength="28" lengthAdjust="spacingAndGlyphs">24.00</text>
<text x="1563" y="966" textLength="28" lengthAdjust="spacingAndGlyphs">48.00</text>
<path d="M1633 959H1642L1637.5 964ZM1756 959H1765L1760.5 964Z" fill="#777" stroke="#999" stroke-width=".5"/>
<text x="1653.5" y="966" textLength="69" lengthAdjust="spacingAndGlyphs">No Anim Layer</text>
<text x="1776.5" y="966" textLength="83" lengthAdjust="spacingAndGlyphs">No Character Set</text>
<circle cx="1881" cy="962" r="2.2" fill="none" stroke="#999"/><path d="M1883 962H1894M1889 962V965M1892 962V965" stroke="#999"/>

<!-- command -->
<path d="M7 981V1004M9 981V1004" class="g"/>
<text x="25" y="996" textLength="18" lengthAdjust="spacingAndGlyphs">MEL</text>
<rect x="59.5" y="981" width="920" height="23" rx="2" fill="#2d2d2d" stroke="#3a3a3a"/>
<rect x="983" y="981" width="915" height="23" fill="#000"/>
<path d="M0 1011H1920" stroke="#2e2e2e"/>
<path d="M0 1033H1920" stroke="#2e2e2e"/>
<rect y="1035" width="1920" height="5" fill="#d4d0c8"/><rect y="1035" width="1920" height="1" fill="#fff"/>
<path d="M1909 1032L1917 1024M1912 1032L1917 1027M1915 1032L1917 1030" stroke="#888"/>
<rect x="1897.5" y="984.5" width="15" height="15" fill="#eee" stroke="#222"/><rect x="1898" y="985" width="14" height="4" fill="#4a7ab0"/><rect x="1900" y="991" width="10" height="3" fill="#666"/><rect x="1900" y="995" width="10" height="3" fill="#666"/>
<path d="M1895 938Q1895 933 1900 933H1920V983Q1900 980 1895 968Z" fill="#fff"/>
<rect x="1899" y="939" width="21" height="20" fill="#0e8ee9"/><circle cx="1909.5" cy="949" r="8" fill="#fff"/><circle cx="1909.5" cy="949" r="6.5" fill="#0e8ee9"/><path d="M1904 949H1915" stroke="#fff" stroke-width="1.5"/><path d="M1906 946L1902.5 949L1906 952ZM1913 946L1916.5 949L1913 952Z" fill="#fff"/>

<!-- minimized window -->
<rect x="1" y="1013" width="158" height="21" fill="url(#ot)" stroke="#d4d0c8" stroke-width="2"/>
<rect x="7" y="1016" width="12" height="15" fill="#26304a"/><path d="M10 1029C10 1024 12 1020 13 1019C16 1023 16 1026 15 1029M11 1022L16 1027" stroke="#aab" fill="none"/>
<text x="23" y="1028" textLength="77" lengthAdjust="spacingAndGlyphs" style="font-weight:bold;fill:#d9d6cf;font-size:12px">C:\Users\Us...</text>
<g fill="#d4d0c8" stroke="#222" stroke-width=".5"><rect x="105" y="1017" width="15" height="14"/><rect x="122" y="1017" width="15" height="14"/><rect x="139" y="1017" width="16" height="14"/></g>
<path d="M110 1019H117V1025M107 1022H114V1029H107Z" fill="none" stroke="#000"/><rect x="125" y="1020" width="9" height="9" fill="none" stroke="#000" stroke-width="1.3"/><path d="M143 1020L151 1028M151 1020L143 1028" stroke="#000" stroke-width="1.6"/>
</svg>
<script>
(function(){
var f=function(n){return n.toFixed(1)};
function P(u,v){var w=1-.028*u-.028*v;return [(784+21.7*u-63.9*v)/w,(698+4.74*u+4.6*v)/w]}
var d='',i;
// lines are clipped to the viewport rectangle so nothing extends past it
function seg(a,b){var x0=47,x1=1463,y0=188,y1=909,t0=0,t1=1,dx=b[0]-a[0],dy=b[1]-a[1];
 var ps=[-dx,dx,-dy,dy],qs=[a[0]-x0,x1-a[0],a[1]-y0,y1-a[1]];
 for(var k=0;k<4;k++){if(ps[k]==0){if(qs[k]<0)return ''}else{var r=qs[k]/ps[k];if(ps[k]<0){if(r>t1)return '';if(r>t0)t0=r}else{if(r<t0)return '';if(r<t1)t1=r}}}
 return 'M'+f(a[0]+t0*dx)+' '+f(a[1]+t0*dy)+'L'+f(a[0]+t1*dx)+' '+f(a[1]+t1*dy)}
for(i=-12;i<=12;i++){d+=seg(P(i,-12),P(i,12))+seg(P(-12,i),P(12,i))}
document.getElementById('grid').setAttribute('d',d);
document.getElementById('axes').setAttribute('d',seg(P(-12,0),P(12,0))+seg(P(0,-12),P(0,12)));
var t='';for(i=1;i<24;i++){var x=21.6+i*66.27;t+='M'+f(x)+' 929V943'}
document.getElementById('ticks').setAttribute('d','M21.6 929V943'+t);
var o=[];
function Z(p){return f(450+p[0]/2.178)+' '+f(240+p[1]/2.45)}
function pl(a){o.push('M'+a.map(Z).join('L'))}
function chaikin(p){var r=[p[0]];for(var k=0;k<p.length-1;k++){var a=p[k],b=p[k+1];r.push([.75*a[0]+.25*b[0],.75*a[1]+.25*b[1]],[.25*a[0]+.75*b[0],.25*a[1]+.75*b[1]])}r.push(p[p.length-1]);return r}
function res(p,n){p=chaikin(chaikin(p));var L=[0],k;for(k=1;k<p.length;k++)L[k]=L[k-1]+Math.hypot(p[k][0]-p[k-1][0],p[k][1]-p[k-1][1]);var r=[],T=L[L.length-1],j=1;for(k=0;k<=n;k++){var s=T*k/n;while(j<p.length-1&&L[j]<s)j++;var q=(s-L[j-1])/((L[j]-L[j-1])||1);r.push([p[j-1][0]+(p[j][0]-p[j-1][0])*q,p[j-1][1]+(p[j][1]-p[j-1][1])*q])}return r}
function loft(A,B,nc,nl,bx,by,amp){bx=bx||0;by=by||0;amp=amp==null?1:amp;var a=res(A,nc),b=res(B,nc),i,j;
 function pt(i,t){var s=Math.sin(Math.PI*t),r=Math.sin(i*1.7)*14*amp*s;return [a[i][0]+(b[i][0]-a[i][0])*t+bx*s+r,a[i][1]+(b[i][1]-a[i][1])*t+by*s+Math.cos(i*1.1)*12*amp*s+Math.sin(t*9+i*.4)*5*amp]}
 for(i=0;i<=nc;i++){var c=[];for(j=0;j<=14;j++)c.push(pt(i,j/14));pl(c)}
 for(j=0;j<=nl;j++){var c2=[];for(i=0;i<=nc;i++)c2.push(pt(i,j/nl));pl(c2)}
}
function tooth(tx,ty,bx,by,w,rings,lon){var r,k,s;
 function q(t,a){var c=[tx+(bx-tx)*t,ty+(by-ty)*t],R=w*Math.pow(t,.42);return [c[0]+Math.cos(a)*R,c[1]+Math.sin(a)*R*.3]}
 for(r=0;r<=rings;r++){var c=[];for(s=0;s<=20;s++)c.push(q(r/rings,s/20*6.2832));pl(c)}
 for(k=0;k<lon;k++){var c3=[];for(r=0;r<=rings;r++)c3.push(q(r/rings,k/lon*6.2832));pl(c3)}
}
function arc(cx,cy,rx,ry,a0,a1){var e=[];for(var k=0;k<=40;k++){var an=a0+(a1-a0)*k/40;e.push([cx+Math.cos(an)*rx,cy+Math.sin(an)*ry])}pl(e)}
var up=[[75,285],[270,150],[560,52],[790,120],[1040,130],[1290,210]],
    mid=[[45,420],[190,400],[480,240],[560,330],[800,290],[1130,360],[1360,420]],
    fr=[[130,510],[250,520],[500,340],[600,510],[800,520],[1130,600],[1290,600]];
loft(up,mid,30,9,0,15);
loft(mid,fr,30,8,0,10);
loft([[45,420],[70,470],[130,510],[165,600],[125,680],[115,830],[130,940],[170,1030]],[[190,400],[210,470],[230,560],[260,640],[230,760],[230,900],[250,1000],[290,1080]],18,6);
loft([[1290,210],[1360,420],[1290,600],[1190,800],[1100,880]],[[1130,220],[1170,400],[1120,580],[1060,760],[960,860]],24,10);
loft([[560,60],[640,300],[620,500],[640,900]],[[1290,220],[1250,420],[1190,640],[1100,860]],22,20,0,0,1.4);
loft([[160,640],[350,560],[620,500],[820,530],[1000,600],[1130,720],[1210,840]],[[170,1030],[340,1120],[560,1100],[800,1040],[1000,980],[1140,900],[1225,880]],34,12);
loft([[115,1100],[300,1160],[530,1260],[800,1200],[1000,1090],[1225,880]],[[125,1180],[220,1330],[400,1440],[720,1440],[1000,1330],[1230,1080]],28,8,0,0,1.5);
loft([[175,1250],[350,1290],[530,1290],[800,1260],[1000,1180],[1190,1000]],[[260,1420],[400,1480],[530,1530],[750,1470],[920,1420],[1190,1230]],24,8,0,0,1.6);
loft([[1120,830],[1180,900],[1215,1000],[1190,1130]],[[1225,860],[1232,1000],[1225,1120],[1190,1230]],8,8);
// curved shell contours
[[560,470,420,230],[600,440,480,300],[700,400,560,250],[820,440,470,240],[660,360,620,280]].forEach(function(a){arc(a[0],a[1],a[2],a[3],3.4,6.1)});
[[640,1150,520,340],[660,1180,470,320],[680,1210,430,300],[700,1230,400,280],[640,1110,540,380]].forEach(function(a){arc(a[0],a[1],a[2],a[3],.1,3.0)});
var sil=[[560,52],[270,150],[75,285],[45,420],[70,470],[130,510],[165,600],[125,680],[115,830],[130,940],[170,1030],[115,1100],[125,1180],[175,1250],[260,1420],[530,1530],[920,1420],[1190,1230],[1230,1080],[1220,860],[1190,800],[1290,600],[1360,420],[1290,210],[1040,115],[790,120],[560,52]];
pl(chaikin(sil));
// dense molar block on the left
loft([[215,560],[300,480],[420,400],[540,350],[595,540]],[[185,900],[265,1130],[400,1130],[520,1090],[600,1000]],80,80,0,0,.5);
loft([[200,620],[330,520],[470,450],[590,540],[600,700]],[[170,950],[290,1150],[420,1100],[560,1060],[620,1000]],60,60,0,0,.8);
// mid-density block behind front teeth
loft([[600,680],[750,660],[850,620],[965,570],[1080,570],[1125,760]],[[600,1050],[750,1030],[900,950],[1000,900],[1050,870],[1130,800]],64,26,0,0,.7);
// upper teeth
[[540,350,500,1000,60],[490,365,470,1020,55],[445,375,420,1040,55],[400,420,370,1060,55],[355,445,320,1080,60],[300,480,270,1100,75],[250,530,230,1090,75]].forEach(function(a){tooth(a[0],a[1],a[2],a[3],a[4],24,16)});
[[655,670,640,960,45],[750,670,735,950,45],[850,625,830,930,45],[965,575,940,900,45],[1080,575,1030,880,50]].forEach(function(a){tooth(a[0],a[1],a[2],a[3],a[4],12,10)});
// lower teeth
[[310,1170,310,850,55],[370,1210,360,880,40],[435,1255,420,900,40],[525,1265,510,930,45],[620,1225,600,940,55],[705,1230,690,950,50],[795,1185,780,950,40],[845,1150,830,920,35],[905,1130,880,900,35],[950,1100,930,900,35],[1050,1040,1030,860,45]].forEach(function(a){tooth(a[0],a[1],a[2],a[3],a[4],22,14)});
// gum loops along the arch
for(i=0;i<18;i++){arc(480,990+i*7,170-i*4,70-i*2,0,6.2832)}
for(i=0;i<10;i++){arc(850,960+i*6,160-i*6,55-i*2,0,6.2832)}
// tube
function ring(t,a,rs){var c=[855+(1392-855)*t,145+(320-145)*t],R=(rs||1);return [c[0]+Math.cos(a)*62*R,c[1]+Math.sin(a)*84*R]}
for(i=0;i<44;i++){var c4=[];for(var j=0;j<=14;j++){var tt=j/14;c4.push(ring(tt,i/44*6.2832,.82+.18*Math.sin(Math.PI*tt*3)*Math.sin(i)))}pl(c4)}
[.08,.14,.2,.26,.32,.38,.44,.5,.56,.62,.68,.74,.8,.86,.92].forEach(function(t,n){var c5=[];for(var s=0;s<=20;s++)c5.push(ring(t,s/20*6.2832,n%3?.8:.95));pl(c5)});
document.getElementById('wire').setAttribute('d',o.join(''));
})();
</script>
</body></html>
